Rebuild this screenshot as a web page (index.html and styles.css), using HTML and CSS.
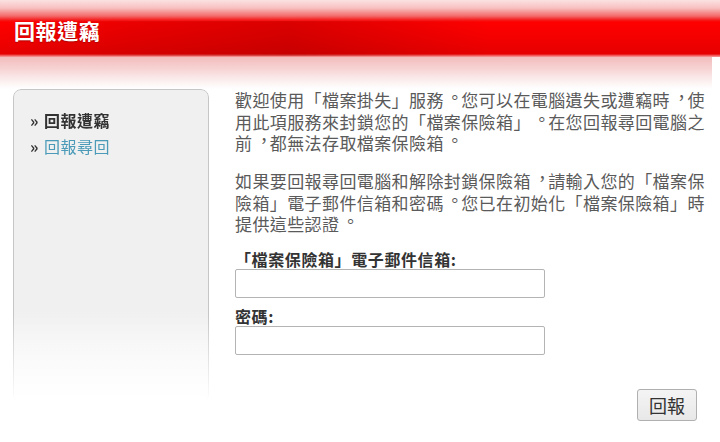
FILE: index.html
```html
<!DOCTYPE html>
<html lang="zh-TW">
<head>
<meta charset="utf-8">
<title>回報遭竊</title>
<link rel="stylesheet" href="styles.css">
</head>
<body>
<header class="header">
  <h1 class="title">回報遭竊</h1>
</header>
<div class="shade"></div>
<div class="page">
  <nav class="sidebar">
    <ul class="menu">
      <li class="menu-item current"><span class="raquo">»</span>回報遭竊</li>
      <li class="menu-item link"><span class="raquo">»</span>回報尋回</li>
    </ul>
  </nav>
  <main class="main">
    <p class="para">歡迎使用「檔案掛失」服務<span class="cp">。</span>您可以在電腦遺失或遭竊時<span class="cp comma">，</span>使用此項服務來封鎖您的「檔案保險箱」<span class="cp">。</span>在您回報尋回電腦之前<span class="cp comma">，</span>都無法存取檔案保險箱<span class="cp">。</span></p>
    <p class="para">如果要回報尋回電腦和解除封鎖保險箱<span class="cp comma">，</span>請輸入您的「檔案保險箱」電子郵件信箱和密碼<span class="cp">。</span>您已在初始化「檔案保險箱」時提供這些認證<span class="cp">。</span></p>
    <form class="form">
      <label class="label">「檔案保險箱」電子郵件信箱:</label>
      <input class="field" type="text">
      <label class="label second">密碼:</label>
      <input class="field" type="password">
      <div class="actions">
        <button class="btn" type="button">回報</button>
      </div>
    </form>
  </main>
</div>
</body>
</html>
```
FILE: styles.css
```css
html, body {
  margin: 0;
  padding: 0;
  background: #ffffff;
}
body {
  font-family: "Noto Sans CJK TC", sans-serif;
  color: #555;
  width: 720px;
  height: 442px;
  overflow: hidden;
  text-spacing-trim: space-all;
}
.header {
  height: 57px;
  background:
    linear-gradient(90deg, rgba(80,0,0,0) 0%, rgba(90,0,0,0.12) 18%, rgba(90,0,0,0.22) 40%, rgba(90,0,0,0.08) 58%, rgba(90,0,0,0) 68%) 0 21px / 100% 35px no-repeat,
    linear-gradient(180deg, #fbe2e2 0px, #f8c0c0 8px, #f46a6a 16px, #f41c1c 20px, #ff0000 22px, #f20000 40px, #e60000 54px, #f04040 55px, #f6a0a0 57px);
  box-sizing: border-box;
  padding: 15px 0 0 14px;
}
.title {
  margin: 0;
  font-size: 21px;
  line-height: 30px;
  font-weight: 700;
  letter-spacing: 0.6px;
  color: #ffffff;
  text-shadow: 0 1px 1px rgba(120,0,0,0.5);
}
.shade {
  width: 712px;
  height: 32px;
  background: linear-gradient(180deg, #f3bcbc 0%, #f6d2d2 35%, #fbecec 70%, #ffffff 100%);
}
.page {
  display: flex;
  padding: 0 0 0 13px;
}
.sidebar {
  width: 196px;
  height: 314px;
  box-sizing: border-box;
  border: 1px solid #c6c6c6;
  border-radius: 8px;
  background: linear-gradient(180deg, #f0f0f0 0%, #f0f0f0 70%, #fafafa 100%);
  -webkit-mask-image: linear-gradient(180deg, #000 0%, #000 72%, rgba(0,0,0,0) 100%);
  mask-image: linear-gradient(180deg, #000 0%, #000 72%, rgba(0,0,0,0) 100%);
  flex-shrink: 0;
}
.menu {
  list-style: none;
  margin: 0;
  padding: 17px 0 0 16px;
}
.menu-item {
  font-size: 16px;
  line-height: 26px;
  letter-spacing: 0.5px;
}
.raquo {
  display: inline-block;
  width: 14px;
  font-weight: 700;
  color: #333;
}
.current {
  font-weight: 700;
  color: #333;
}
.link {
  color: #4a9ab8;
}
.main {
  margin-left: 26px;
  width: 475px;
}
.para {
  margin: 0 0 16.5px 0;
  font-size: 17px;
  line-height: 21.5px;
  letter-spacing: 0.4px;
  color: #5a5a5a;
}
.cp {
  display: inline-block;
  width: 17.4px;
  letter-spacing: 0;
  text-align: left;
  transform: translate(2.5px, -3px);
}
.cp.comma {
  transform: translate(3px, -3.5px);
}
.form {
  display: flex;
  flex-direction: column;
  margin-top: -2.5px;
}
.label {
  font-size: 16px;
  line-height: 20px;
  font-weight: 700;
  letter-spacing: 0.6px;
  color: #333;
  margin-top: 0;
}
.label.second {
  margin-top: 8px;
}
.field {
  width: 310px;
  height: 29px;
  box-sizing: border-box;
  margin: 0;
  border: 1px solid #b4b4b4;
  border-radius: 2px;
  background: #fff;
}
.actions {
  display: flex;
  justify-content: flex-end;
  padding-right: 13px;
  margin-top: 34px;
}
.btn {
  width: 60px;
  height: 32px;
  font-family: "Noto Sans CJK TC", sans-serif;
  font-size: 18px;
  color: #333;
  background: linear-gradient(180deg, #f4f4f4, #e8e8e8);
  border: 1px solid #b0b0b0;
  border-radius: 3px;
  padding: 0;
}
```
